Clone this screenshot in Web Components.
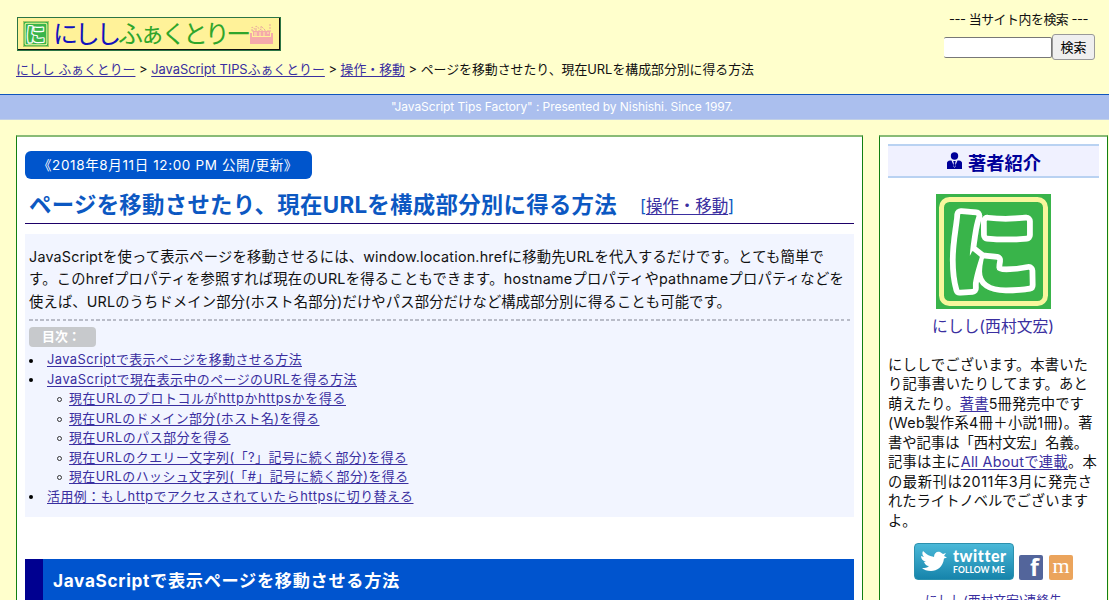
<!DOCTYPE html>
<html lang="ja"><head><meta charset="utf-8"><title>ページを移動させたり、現在URLを構成部分別に得る方法</title>
<style>
body{margin:0;height:600px;overflow:hidden;background:#ffffcc;font-family:Inter,"Noto Sans CJK JP",sans-serif;color:#111;text-spacing-trim:space-all;--link:#3a2fa0}
</style></head><body>
<tips-page></tips-page>
<script>
const define=(name,html)=>customElements.define(name,class extends HTMLElement{
  constructor(){super();this.attachShadow({mode:'open'}).innerHTML=html;}
});
const A='a{color:var(--link);text-decoration:underline;text-underline-offset:2px;text-decoration-thickness:1px}';

define('tips-page',`<style>:host{display:block;height:600px}.cols{display:grid;grid-template-columns:847px 229px;column-gap:16px;padding:15px 0 0 16px;align-items:start}</style>
<site-header></site-header><tag-strip><text-run w="342">"JavaScript Tips Factory" : Presented by Nishishi. Since 1997.</text-run></tag-strip>
<div class="cols"><tips-article></tips-article><author-panel></author-panel></div>`);

define('site-header',`<style>:host{display:flex;justify-content:space-between;height:94px;box-sizing:border-box;padding:9px 14px 0 16px}
.left{padding-top:8px}site-logo{margin-left:1px}nav{font-size:12.9px;line-height:20px;margin-top:9px;white-space:nowrap}${A}</style>
<div class="left"><site-logo></site-logo><nav><text-run w="738"><a>にしし ふぁくとりー</a> &gt; <a>JavaScript TIPSふぁくとりー</a> &gt; <a>操作・移動</a> &gt; ページを移動させたり、現在URLを構成部分別に得る方法</text-run></nav></div><site-search></site-search>`);

define('ni-mark',`<style>:host{display:block}svg{display:block;width:100%;height:100%}text{font:900 88px "Noto Sans CJK JP",sans-serif;text-anchor:middle}</style>
<svg viewBox="0 0 115 115"><rect width="115" height="115" fill="#39b44a"/><rect x="5.5" y="5.5" width="104" height="104" rx="8" fill="none" stroke="#f8f79d" stroke-width="5"/>
<g transform="translate(56.500 90)" stroke-linejoin="round"><text fill="#fff" stroke="#fff" stroke-width="13">に</text><text fill="#39b44a" stroke="#39b44a" stroke-width="1.500">に</text></g></svg>`);

define('site-logo',`<style>:host{display:flex;box-sizing:border-box;width:264px;height:34px;border:1px solid #111;border-width:1px 2px 2px 1px;outline:1px solid #2c7545;outline-offset:-1px;background:#fff299;padding:4px 5px;align-items:center;font:25px/24px "Noto Sans CJK JP",sans-serif;white-space:nowrap}
ni-mark{width:24px;height:24px;border:1px solid #a8c866;margin-right:4px}b{font-weight:400;color:#1111bd}i{font-style:normal;color:#2fa52b}b,i{margin-top:-4px}svg{margin-left:2px}</style>
<ni-mark></ni-mark><b><text-run w="65">にしし</text-run></b><i><text-run w="130">ふぁくとりー</text-run></i>
<svg width="23" height="22" viewBox="0 0 23 22"><g fill="none" stroke="#e8a8a0"><path d="M2 8V4l4 3V3l5 4V3l4 4M20 9V1M2 8h18" stroke-dasharray="2 1"/></g><path d="M0 10h2v4h19v-4h2v11H0zM3 8h17v5H3z" fill="#f5aaaa"/><path d="M4 10h3M9 10h2M13 10h2M17 10h2M4 12h3M9 12h2M13 12h2" stroke="#fff1a0"/></svg>`);

define('site-search',`<style>:host{display:flex;flex-direction:column;width:151px}.t{padding-left:5px;font-size:12.9px;line-height:22px}.r{display:flex;align-items:center;margin-top:3px}
.in{box-sizing:border-box;width:108px;height:21px;border:1px solid #777;border-left:0;border-radius:2px;background:#fff}
.b{box-sizing:border-box;width:43px;height:26px;border:1px solid #999;border-radius:3px;background:#efefef;font-size:13px;line-height:24px;text-align:center;color:#000}</style>
<div class="t"><text-run w="139">--- 当サイト内を検索 ---</text-run></div><div class="r"><div class="in"></div><div class="b">検索</div></div>`);

define('tag-strip',`<style>:host{display:block;box-sizing:border-box;height:26px;border-top:1px solid #0f55bd;border-bottom:1px solid #c2d0e5;background:#abbfee;color:#fff;font-size:12px;line-height:24px;padding-left:391px}</style><slot></slot>`);

define('tips-article',`<style>:host{display:block;box-sizing:border-box;height:465px;border:1px solid #128012;border-top:2px solid #89bb76;border-bottom:0;background:#fff;padding:14px 8px 0}
.date{box-sizing:border-box;width:287px;height:28px;border-radius:6px;background:#0055cc;color:#fff;font-size:13.5px;line-height:28px;padding-left:13px}
.h1{display:flex;height:44px;border-bottom:1px solid #1d0068;padding-left:4px;color:#0c58c2;line-height:51px}
.h1 b{font-size:22.4px;font-weight:700}.h1 span{font-size:16.6px;margin-left:23px;line-height:55px}${A}
.intro{box-sizing:border-box;height:283px;margin-top:10px;background:#f2f5ff;padding:12px 4px 0}
p{margin:0;font-size:14.3px;line-height:22.4px;height:73px}.rule{height:2px;background:repeating-linear-gradient(90deg,#b9bcc8 0 3.500px,#f2f5ff 3.500px 5.600px)}
p text-run,.sec text-run{display:table}
.lab{box-sizing:border-box;width:67px;height:20px;margin-top:6px;border-radius:4px;background:#c7c9cc;color:#fff;font-size:12.9px;font-weight:700;line-height:20px;padding-left:13px}
toc-list{margin-top:3px}
.sec{box-sizing:border-box;height:41px;margin-top:42px;border-left:18px solid #000090;background:#0054ce;color:#fff;font-size:17.2px;font-weight:700;line-height:44px;padding-left:10px}</style>
<div class="date"><text-run w="260">《2018年8月11日 12:00 PM 公開/更新》</text-run></div>
<div class="h1"><b><text-run w="588">ページを移動させたり、現在URLを構成部分別に得る方法</text-run></b><span><text-run w="94">[<a>操作・移動</a>]</text-run></span></div>
<div class="intro"><p><text-run w="795">JavaScriptを使って表示ページを移動させるには、window.location.hrefに移動先URLを代入するだけです。とても簡単で</text-run><text-run w="815">す。このhrefプロパティを参照すれば現在のURLを得ることもできます。hostnameプロパティやpathnameプロパティなどを</text-run><text-run w="702">使えば、URLのうちドメイン部分(ホスト名部分)だけやパス部分だけなど構成部分別に得ることも可能です。</text-run></p><div class="rule"></div>
<div class="lab">目次：</div><toc-list></toc-list></div>
<div class="sec"><text-run w="347">JavaScriptで表示ページを移動させる方法</text-run></div>`);

const toc=[[0,255,'JavaScriptで表示ページを移動させる方法'],[0,310,'JavaScriptで現在表示中のページのURLを得る方法'],[1,277,'現在URLのプロトコルがhttpかhttpsかを得る'],[1,250.5,'現在URLのドメイン部分(ホスト名)を得る'],[1,161.5,'現在URLのパス部分を得る'],[1,338.5,'現在URLのクエリー文字列(「?」記号に続く部分)を得る'],[1,339.5,'現在URLのハッシュ文字列(「#」記号に続く部分)を得る'],[0,366.5,'活用例：もしhttpでアクセスされていたらhttpsに切り替える']];
define('toc-list',`<style>:host{display:block;font-size:12.9px;line-height:19.5px}div{display:flex;align-items:center;height:19.5px}
i{box-sizing:border-box;width:4px;height:4px;border-radius:50%;background:#000;margin:2px 14px 0 0}.s{padding-left:28px}.s i{width:5px;height:5px;background:none;border:1px solid #333;margin-right:7px}${A}</style>`+
toc.map(([s,w,t])=>`<div class="${s?'s':''}"><i></i><text-run w="${w}"><a>${t}</a></text-run></div>`).join(''));

define('author-panel',`<style>:host{display:block;box-sizing:border-box;height:465px;border:1px solid #128012;border-top:2px solid #89bb76;border-bottom:0;background:#fff;padding:7px 8px 0}
.h{display:flex;box-sizing:border-box;height:34px;border:solid #b9d2f2;border-width:2px 0;background:#f0f1ff;color:#000099;font-size:18.2px;font-weight:700;line-height:34px;padding-left:59px}.h svg{margin:6px 6px 0 0}
ni-mark{width:115px;height:115px;margin:16px auto 0}.name{color:var(--link);font-size:15.8px;line-height:24px;margin:6px 0 0 44px}
p{margin:16px 0 0 0;font-size:14.3px;line-height:19.45px}p text-run{display:table}${A}
.soc{display:flex;align-items:flex-end;margin:13px 0 0 26px;height:37px}
.tw{display:flex;box-sizing:border-box;width:100px;height:37px;border-radius:4px;background:linear-gradient(#4ab8d8,#1684ab);border:1px solid #2c91ae;color:#fff;padding-left:5px}.tw svg{margin-top:6px}
.tw div{margin-left:5px;padding-top:3px}.tw b{display:block;font-size:16px;line-height:18px;font-family:Lato,sans-serif;font-weight:900}.tw small{display:block;font:700 8.5px/10px Lato,sans-serif}
.q{display:flex;align-items:center;justify-content:center;width:24px;height:25px;border-radius:2px;margin-left:5px;background:#53659b;color:#fff;font:bold 23px/25px "Open Sans",sans-serif;box-sizing:border-box;padding-left:7px}.m{margin-left:6px;background:#eba45c;font:22px/25px "Liberation Serif",serif;padding:0 0 4px}
.foot{font-size:12.5px;line-height:18px;height:9px;margin:12px 0 0 37px;color:var(--link)}</style>
<div class="h"><svg width="15" height="18" viewBox="0 0 15 18"><circle cx="7.5" cy="4" r="3.7" fill="#000099"/><path fill-rule="evenodd" d="M0 17v-6q0-2 3-2.500h1.500l3 7 3-7H12q3 .5 3 2.500v6zM6.200 9h2.600l-.6 2 .5 3-1.200 2-1.200-2 .5-3z" fill="#000099"/></svg><text-run w="73">著者紹介</text-run></div>
<ni-mark></ni-mark><div class="name"><text-run w="122">にしし(西村文宏)</text-run></div>
<p><text-run w="200">にししでございます。本書いた</text-run><text-run w="200">り記事書いたりしてます。あと</text-run><text-run w="196">萌えたり。<a>著書</a>5冊発売中です</text-run><text-run w="205">(Web製作系4冊＋小説1冊)。著</text-run><text-run w="200">書や記事は「西村文宏」名義。</text-run><text-run w="209">記事は主に<a>All Aboutで連載</a>。本</text-run><text-run w="204.500">の最新刊は2011年3月に発売さ</text-run><text-run w="200">れたライトノベルでございます</text-run><text-run w="28.6">よ。</text-run></p>
<div class="soc"><div class="tw"><svg width="28" height="24" viewBox="0 0 28 24"><path fill="#fff" d="M27 7.500l-3 1C23 17 17 21 11 21c-4 0-7-1-9-3 3 0 5 0 7-2-3 0-4-2-5-4h2c-3-1-5-3-5-6l3 1C2 5 2 3 3 1c4 4 7 5 11 6 0-4 3-6 6-5l3 2 3-1-2 3z"/></svg><div><b><text-run w="53">twitter</text-run></b><small><text-run w="52">FOLLOW ME</text-run></small></div></div><div class="q">f</div><div class="q m">m</div></div>
<div class="foot"><text-run w="137">にしし(西村文宏)連絡先</text-run></div>`);

/* One line of text, tracked so that it fills the measure given in w. */
customElements.define('text-run',class extends HTMLElement{
  constructor(){super();this.attachShadow({mode:'open'}).innerHTML='<style>:host{display:inline-block;white-space:nowrap}</style><slot></slot>';}
  connectedCallback(){
    const w=+this.getAttribute('w'),n=[...this.textContent].length;
    this.style.letterSpacing='0px';
    this.style.letterSpacing=(w-this.getBoundingClientRect().width)/n+'px';
  }
});
</script></body></html>
